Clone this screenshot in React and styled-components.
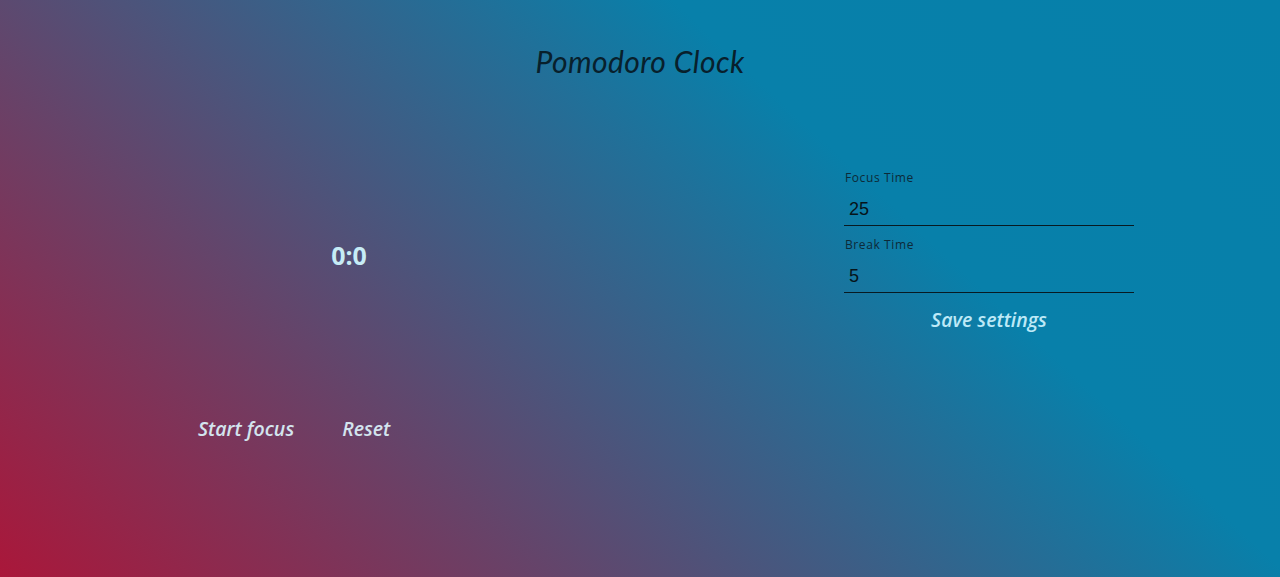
import styled, { createGlobalStyle } from "styled-components"

const GlobalStyle = createGlobalStyle`
    html, body {
        margin: 0;
        padding: 0;
        height: 100%;
    }
    body {
        font-family: "Open Sans", "Liberation Sans", sans-serif;
        background: linear-gradient(43deg, #aa173a 0%, #0880aa 68%, #0680aa 100%);
        background-attachment: fixed;
        min-height: 577px;
    }
`

const App = () => {
    return (
        <>
            <GlobalStyle />
            <Page>
                <Title>Pomodoro Clock</Title>
                <Main>
                    <ClockPanel>
                        <Timer>0:0</Timer>
                        <Controls>
                            <TextButton>Start focus</TextButton>
                            <TextButton>Reset</TextButton>
                        </Controls>
                    </ClockPanel>
                    <Settings>
                        <Field>
                            <Label>Focus Time</Label>
                            <Input defaultValue="25" />
                        </Field>
                        <Field>
                            <Label>Break Time</Label>
                            <Input defaultValue="5" />
                        </Field>
                        <SaveButton>Save settings</SaveButton>
                    </Settings>
                </Main>
            </Page>
        </>
    )
}

const Page = styled.div`
    min-height: 577px;
    display: flex;
    flex-direction: column;
`
const Title = styled.h1`
    margin: 43px 0 0;
    text-align: center;
    font-family: "Lato", sans-serif;
    font-style: italic;
    font-weight: 400;
    font-size: 30px;
    letter-spacing: 0.4px;
    line-height: 36px;
    color: #08202c;
`
const Main = styled.div`
    display: flex;
    padding-left: 198px;
    margin-top: 91px;
`
const ClockPanel = styled.div`
    width: 302px;
    display: flex;
    flex-direction: column;
`
const Timer = styled.div`
    margin-top: 70px;
    text-align: center;
    font-family: "Open Sans", sans-serif;
    font-weight: 700;
    font-size: 25px;
    line-height: 30px;
    color: #c6ecf6;
`
const Controls = styled.div`
    display: flex;
    gap: 48px;
    margin-top: 147px;
`
const TextButton = styled.button`
    background: none;
    border: none;
    padding: 0;
    cursor: pointer;
    font-family: "Open Sans", sans-serif;
    font-style: italic;
    font-weight: 600;
    font-size: 19.5px;
    line-height: 24px;
    color: #d3e4ee;
`
const Settings = styled.div`
    margin-left: 344px;
    width: 290px;
    display: flex;
    flex-direction: column;
`
const Field = styled.label`
    display: flex;
    flex-direction: column;
    margin-bottom: 11px;
`
const Label = styled.span`
    font-family: "Open Sans", sans-serif;
    font-size: 12px;
    letter-spacing: 0.6px;
    line-height: 16px;
    color: #0d2a38;
    padding-left: 1px;
`
const Input = styled.input`
    background: transparent;
    border: none;
    border-bottom: 1px solid #081a22;
    outline: none;
    padding: 14px 5px 6px;
    font-family: "Liberation Sans", Arial, sans-serif;
    font-size: 18px;
    line-height: 20px;
    height: 40px;
    box-sizing: border-box;
    color: #06141a;
`
const SaveButton = styled(TextButton)`
    align-self: center;
    margin-top: 4px;
    color: #bde9f7;
`

export default App
